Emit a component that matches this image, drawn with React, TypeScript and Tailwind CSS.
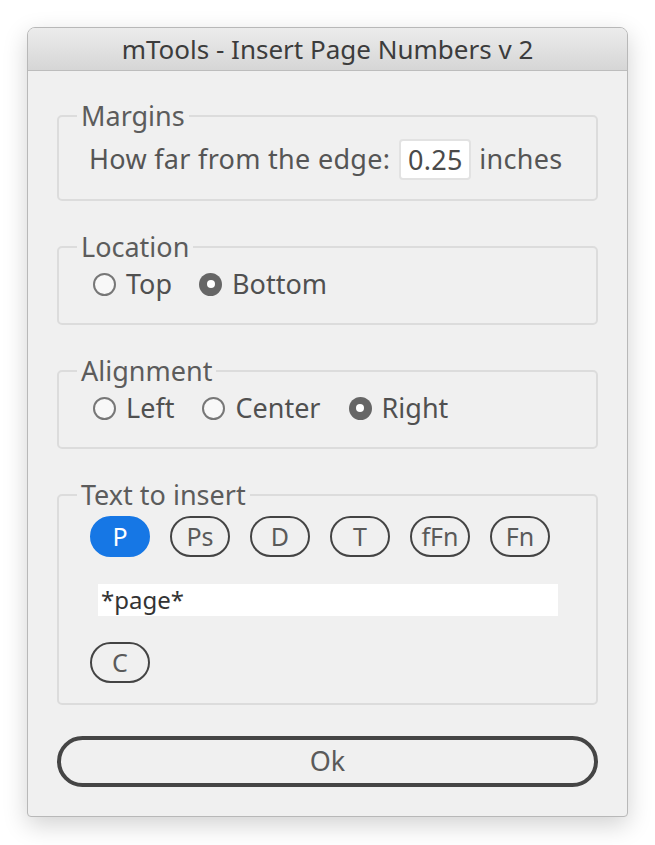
import { useState } from 'react';

const TOKENS = ['P', 'Ps', 'D', 'T', 'fFn', 'Fn'];

function Radio({ label, checked, onClick }: { label: string; checked: boolean; onClick: () => void }) {
  return (
    <button type="button" onClick={onClick} className="flex items-center gap-[10px] text-[27px] leading-[30px] text-[#505050]">
      {checked ? (
        <span className="w-[23px] h-[23px] rounded-full bg-[#666] flex items-center justify-center">
          <span className="w-[8px] h-[8px] rounded-full bg-white" />
        </span>
      ) : (
        <span className="w-[23px] h-[23px] rounded-full border-2 border-[#777] bg-[#f8f8f8]" />
      )}
      {label}
    </button>
  );
}

function Group({ title, children, className = '' }: { title: string; children: React.ReactNode; className?: string }) {
  return (
    <fieldset className={`border-2 border-[#dcdcdc] rounded-[5px] px-[32px] ${className}`}>
      <legend className="ml-[-14px] px-[4px] text-[27px] leading-[30px] text-[#5c5c5c]">{title}</legend>
      {children}
    </fieldset>
  );
}

function Pill({ label, active, onClick }: { label: string; active?: boolean; onClick?: () => void }) {
  return (
    <button
      type="button"
      onClick={onClick}
      className={`w-[60px] h-[41px] rounded-full border-2 text-[25px] leading-none flex items-center justify-center ${
        active ? 'bg-[#1677e5] border-[#1677e5] text-white' : 'border-[#444] text-[#5a5a5a]'
      }`}
    >
      {label}
    </button>
  );
}

export default function App() {
  const [location, setLocation] = useState('Bottom');
  const [align, setAlign] = useState('Right');
  const [token, setToken] = useState('P');
  const [margin, setMargin] = useState('0.25');
  const [text, setText] = useState('*page*');

  return (
    <div className="min-h-screen bg-white pt-[27px] pl-[27px] font-['Noto_Sans','Liberation_Sans',sans-serif]">
      <div className="w-[601px] h-[790px] flex flex-col rounded-t-[8px] rounded-b-[4px] border border-[#b8b8b8] bg-[#f0f0f0] shadow-[0_8px_24px_rgba(0,0,0,0.18)] overflow-hidden">
        {/* Title bar */}
        <div className="h-[43px] flex-shrink-0 flex items-center justify-center bg-gradient-to-b from-[#ececec] to-[#d6d6d6] border-b border-[#bdbdbd] text-[26px] text-[#3c3c3c]">
          mTools - Insert Page Numbers v 2
        </div>

        <div className="flex-1 flex flex-col gap-[31px] px-[29px] pt-[30px]">
          <Group title="Margins" className="pt-[8px] pb-[19px]">
            <div className="flex items-center h-[41px] text-[27px] tracking-[0.3px] text-[#555] ml-[-2px]">
              <span>How far from the edge:</span>
              <input
                value={margin}
                onChange={(e) => setMargin(e.target.value)}
                className="ml-[9px] mr-[8px] w-[72px] h-[41px] rounded-[4px] border-2 border-[#e2e2e2] bg-white text-center text-[27px] text-[#4a4a4a] outline-none"
              />
              <span>inches</span>
            </div>
          </Group>

          <Group title="Location" className="pt-[7px] pb-[24px]">
            <div className="flex items-center gap-[27px] ml-[2px]">
              {['Top', 'Bottom'].map((l) => (
                <Radio key={l} label={l} checked={location === l} onClick={() => setLocation(l)} />
              ))}
            </div>
          </Group>

          <Group title="Alignment" className="pt-[7px] pb-[24px]">
            <div className="flex items-center gap-[28px] ml-[2px]">
              {['Left', 'Center', 'Right'].map((l) => (
                <Radio key={l} label={l} checked={align === l} onClick={() => setAlign(l)} />
              ))}
            </div>
          </Group>

          <Group title="Text to insert" className="pt-[6px] pb-[20px]">
            <div className="flex items-center gap-[20px] ml-[-1px]">
              {TOKENS.map((t) => (
                <Pill key={t} label={t} active={token === t} onClick={() => setToken(t)} />
              ))}
            </div>
            <input
              value={text}
              onChange={(e) => setText(e.target.value)}
              className="mt-[27px] ml-[7px] block w-[460px] h-[32px] bg-white px-[3px] text-[24px] text-[#333] outline-none"
            />
            <div className="mt-[26px] ml-[-1px]">
              <Pill label="C" />
            </div>
          </Group>

          <button
            type="button"
            className="h-[51px] rounded-full border-[4px] border-[#454545] text-[27px] text-[#5a5a5a]"
          >
            Ok
          </button>
        </div>
      </div>
    </div>
  );
}
